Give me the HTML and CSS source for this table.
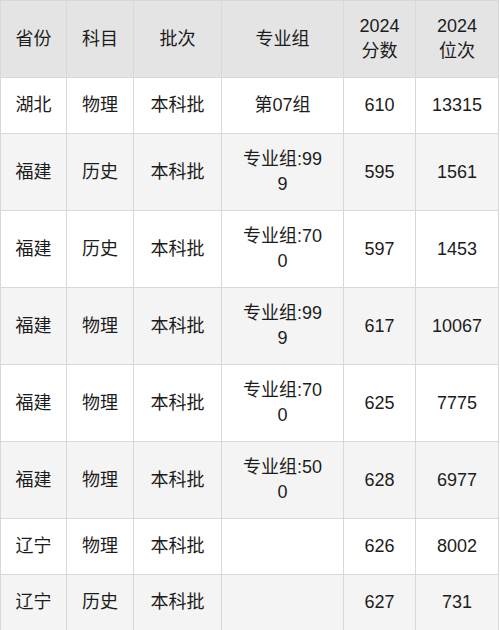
FILE: index.html
```html
<!DOCTYPE html>
<html lang="zh-CN">
<head>
<meta charset="utf-8">
<link rel="stylesheet" href="styles.css">
</head>
<body>
<table class="score-table">
  <colgroup>
    <col class="c1"><col class="c2"><col class="c3"><col class="c4"><col class="c5"><col class="c6">
  </colgroup>
  <thead>
    <tr>
      <th>省份</th><th>科目</th><th>批次</th><th class="grp">专业组</th><th>2024<br>分数</th><th>2024<br>位次</th>
    </tr>
  </thead>
  <tbody>
    <tr class="single"><td>湖北</td><td>物理</td><td>本科批</td><td class="grp">第07组</td><td>610</td><td>13315</td></tr>
    <tr><td>福建</td><td>历史</td><td>本科批</td><td class="grp">专业组:999</td><td>595</td><td>1561</td></tr>
    <tr><td>福建</td><td>历史</td><td>本科批</td><td class="grp">专业组:700</td><td>597</td><td>1453</td></tr>
    <tr><td>福建</td><td>物理</td><td>本科批</td><td class="grp">专业组:999</td><td>617</td><td>10067</td></tr>
    <tr><td>福建</td><td>物理</td><td>本科批</td><td class="grp">专业组:700</td><td>625</td><td>7775</td></tr>
    <tr><td>福建</td><td>物理</td><td>本科批</td><td class="grp">专业组:500</td><td>628</td><td>6977</td></tr>
    <tr class="single"><td>辽宁</td><td>物理</td><td>本科批</td><td class="grp"></td><td>626</td><td>8002</td></tr>
    <tr class="single"><td>辽宁</td><td>历史</td><td>本科批</td><td class="grp"></td><td>627</td><td>731</td></tr>
  </tbody>
</table>
</body>
</html>
```
FILE: styles.css
```css
html, body {
  margin: 0;
  padding: 0;
  background: #ffffff;
}

.score-table {
  width: 498px;
  table-layout: fixed;
  border-collapse: collapse;
  font-family: "Liberation Sans", "Noto Sans CJK SC", sans-serif;
  font-size: 18px;
  color: #1c1c1c;
}

.c1 { width: 66px; }
.c2 { width: 67px; }
.c3 { width: 88px; }
.c4 { width: 122px; }
.c5 { width: 72px; }
.c6 { width: 83px; }

.score-table th,
.score-table td {
  border: 1px solid #d8d8d8;
  text-align: center;
  vertical-align: middle;
  font-weight: normal;
  line-height: 25px;
  padding: 0 6px;
  height: 77px;
  box-sizing: border-box;
}

.score-table thead th {
  background: #e4e4e4;
}

.score-table tbody tr:nth-child(even) td {
  background: #f4f4f4;
}

.score-table tr.single td {
  height: 56px;
}

.score-table .grp {
  padding: 0 20px;
  word-break: break-all;
}
```
